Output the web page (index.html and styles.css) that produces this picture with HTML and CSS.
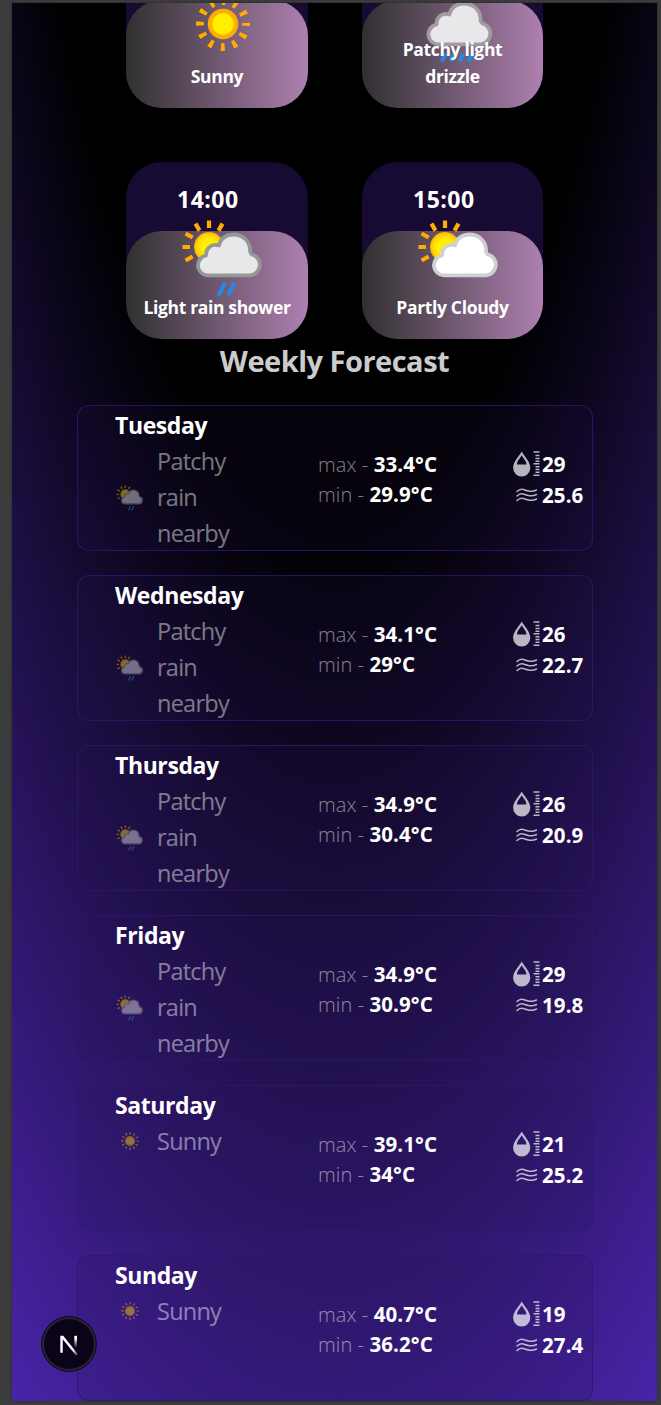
FILE: index.html
```
<!DOCTYPE html>
<html lang="en">
<head>
<meta charset="utf-8">
<title>Weather</title>
<link rel="stylesheet" href="styles.css">
</head>
<body>
<svg class="sprite" aria-hidden="true">
  <defs>
    <radialGradient id="sunFill"><stop offset=".45" stop-color="#fff000"/><stop offset=".8" stop-color="#ffd60a"/><stop offset="1" stop-color="#ffae00"/></radialGradient>
    <symbol id="sunny" viewBox="0 0 96 96">
      <circle cx="48" cy="48" r="13" fill="#fff000" stroke="#ffae00" stroke-width="4.5"/>
      <circle cx="48" cy="48" r="23" fill="none" stroke="#ffae00" stroke-width="8" stroke-dasharray="4 8.043" stroke-dashoffset="2"/>
    </symbol>
    <symbol id="halfsun" viewBox="0 0 96 96">
      <circle cx="34" cy="40" r="15" fill="url(#sunFill)"/>
      <path d="M34 13.500v7.500M20.500 16.600l4 7M47.500 16.600l-4 7M10.600 26.500l7 4M7.500 40h7.500M10.600 53.500l7-4" fill="none" stroke="#ffae00" stroke-width="4.200"/>
    </symbol>
    <symbol id="cloud" viewBox="0 0 96 96">
      <path d="M32.500 68.300a10 10 0 0 1-1.500-19.800C31 40.500 37 36.500 44 38.500C45.500 31 52 27.500 58.500 27.500C68 27.500 75.500 34.500 75 44.500C75.300 46 76 47 77 47.500A10.600 10.600 0 0 1 75 68.300Z" stroke-width="3.800" stroke-linejoin="round"/>
    </symbol>
    <symbol id="partly" viewBox="0 0 96 96">
      <use href="#halfsun"/><use href="#cloud" fill="#fff" stroke="#cfd0d2"/>
    </symbol>
    <symbol id="shower" viewBox="0 0 96 96">
      <use href="#halfsun"/><use href="#cloud" fill="#e8e8eb" stroke="#969898"/>
      <path d="M50 75.500l-6.500 13M59.500 75.500l-6.500 13" stroke="#2589e4" stroke-width="4"/>
    </symbol>
    <symbol id="drizzle" viewBox="0 0 96 96">
      <use href="#cloud" x="-5.500" fill="#e8e8eb" stroke="#a09ca0"/>
      <path d="M34.500 77.500l-4 8M43.500 77.500l-4 8M52.500 77.500l-4 8M61.500 77.500l-4 8" stroke="#2589e4" stroke-width="4"/>
    </symbol>
    <symbol id="humidity" viewBox="0 0 27 26">
      <path fill-rule="evenodd" d="M8.700.5C11 5 17.300 10.500 17.300 16.800a8.600 8.600 0 0 1-17.200 0C.1 10.500 6.400 5 8.700.5ZM8.700 4.300C7 7.500 4 10 4 13.500h9.400C13.400 10 10.400 7.500 8.700 4.300Z"/>
      <path d="M20.500 1h6M22.500 4.400h4M22.500 7.600h4M20.500 12.800h6M22.500 10.200h4M22.500 15.800h4M22.500 18.400h4M22.500 21.200h4M20.500 24.200h6" stroke="currentColor" stroke-width="1.500"/>
    </symbol>
    <symbol id="wind" viewBox="0 0 22 16">
      <path d="M1 4.500C5 .5 8 2.800 11.500 3.800S17 5 20.500 3M1 9C5 5 8 7.300 11.500 8.300S17 9.500 20.500 7.500M1 13.500C5 9.500 8 11.800 11.500 12.800S17 14 20.500 12" fill="none" stroke="currentColor" stroke-width="1.500" stroke-linecap="round"/>
    </symbol>
  </defs>
</svg>
<main class="page">
  <section class="hours">
    <article class="hour"><div class="panel"><svg class="hour-icon"><use href="#sunny"/></svg><p class="cond">Sunny</p></div></article>
    <article class="hour"><div class="panel"><svg class="hour-icon"><use href="#drizzle"/></svg><p class="cond">Patchy light<br>drizzle</p></div></article>
    <article class="hour"><span class="time">14:00</span><div class="panel"><svg class="hour-icon"><use href="#shower"/></svg><p class="cond">Light rain shower</p></div></article>
    <article class="hour"><span class="time">15:00</span><div class="panel"><svg class="hour-icon"><use href="#partly"/></svg><p class="cond">Partly Cloudy</p></div></article>
  </section>
  <h2 class="heading">Weekly Forecast</h2>
  <section class="week">
    <article class="day">
      <div class="summary"><h3>Tuesday</h3><div class="sky"><svg><use href="#shower"/></svg><p>Patchy<br>rain<br>nearby</p></div></div>
      <div class="temps"><p>max - <b>33.4°C</b></p><p>min - <b>29.9°C</b></p></div>
      <div class="stats"><p><svg class="hum"><use href="#humidity"/></svg><b>29</b></p><p><svg class="wind"><use href="#wind"/></svg><b>25.6</b></p></div>
    </article>
    <article class="day">
      <div class="summary"><h3>Wednesday</h3><div class="sky"><svg><use href="#shower"/></svg><p>Patchy<br>rain<br>nearby</p></div></div>
      <div class="temps"><p>max - <b>34.1°C</b></p><p>min - <b>29°C</b></p></div>
      <div class="stats"><p><svg class="hum"><use href="#humidity"/></svg><b>26</b></p><p><svg class="wind"><use href="#wind"/></svg><b>22.7</b></p></div>
    </article>
    <article class="day">
      <div class="summary"><h3>Thursday</h3><div class="sky"><svg><use href="#shower"/></svg><p>Patchy<br>rain<br>nearby</p></div></div>
      <div class="temps"><p>max - <b>34.9°C</b></p><p>min - <b>30.4°C</b></p></div>
      <div class="stats"><p><svg class="hum"><use href="#humidity"/></svg><b>26</b></p><p><svg class="wind"><use href="#wind"/></svg><b>20.9</b></p></div>
    </article>
    <article class="day">
      <div class="summary"><h3>Friday</h3><div class="sky"><svg><use href="#shower"/></svg><p>Patchy<br>rain<br>nearby</p></div></div>
      <div class="temps"><p>max - <b>34.9°C</b></p><p>min - <b>30.9°C</b></p></div>
      <div class="stats"><p><svg class="hum"><use href="#humidity"/></svg><b>29</b></p><p><svg class="wind"><use href="#wind"/></svg><b>19.8</b></p></div>
    </article>
    <article class="day">
      <div class="summary"><h3>Saturday</h3><div class="sky"><svg><use href="#sunny"/></svg><p>Sunny</p></div></div>
      <div class="temps"><p>max - <b>39.1°C</b></p><p>min - <b>34°C</b></p></div>
      <div class="stats"><p><svg class="hum"><use href="#humidity"/></svg><b>21</b></p><p><svg class="wind"><use href="#wind"/></svg><b>25.2</b></p></div>
    </article>
    <article class="day">
      <div class="summary"><h3>Sunday</h3><div class="sky"><svg><use href="#sunny"/></svg><p>Sunny</p></div></div>
      <div class="temps"><p>max - <b>40.7°C</b></p><p>min - <b>36.2°C</b></p></div>
      <div class="stats"><p><svg class="hum"><use href="#humidity"/></svg><b>19</b></p><p><svg class="wind"><use href="#wind"/></svg><b>27.4</b></p></div>
    </article>
  </section>
  <button class="badge" aria-label="Developer tools">
    <svg viewBox="0 0 56 56">
      <defs><linearGradient id="fade" x1="0" y1="0" x2="0" y2="1"><stop offset=".2" stop-color="#fff"/><stop offset="1" stop-color="#fff" stop-opacity="0"/></linearGradient>
      <linearGradient id="diag" x1="0" y1="0" x2="1" y2="1"><stop offset=".7" stop-color="#fff"/><stop offset="1" stop-color="#fff" stop-opacity=".15"/></linearGradient></defs>
      <path d="M19 19.500h3L37.300 38.500l-2 1.500L21.500 23V37H19Z" fill="url(#diag)"/>
      <rect x="33.500" y="19.500" width="2.800" height="12.500" fill="url(#fade)"/>
    </svg>
  </button>
</main>
</body>
</html>
```
FILE: styles.css
```
* { box-sizing: border-box; margin: 0; padding: 0; }
html, body { height: 1405px; overflow: hidden; }
body {
  padding: 3px 4px 4px 12px;
  background: #3c3c3c;
  color: #fff;
  font-family: "Open Sans", "Noto Sans", sans-serif;
}
.sprite { position: absolute; width: 0; height: 0; }
.page {
  position: relative;
  height: 1398px;
  overflow: hidden;
  background: radial-gradient(807px 2766px at 322.500px -595px, #000 40%, #63e 100%);
  box-shadow: 0 0 2px #222;
}
.hours {
  display: grid;
  grid-template-columns: 182px 181px;
  justify-content: center;
  gap: 54px;
  margin: -72px 0 0;
}
.hour {
  height: 177px;
  display: flex;
  flex-direction: column;
  border-radius: 36px;
  background: #180b33;
}
.time {
  margin: 19px 0 0 51px;
  font-size: 23px;
  line-height: 36px;
  font-weight: 700;
  letter-spacing: .5px;
}
.panel {
  height: 108px;
  margin-top: auto;
  display: flex;
  flex-direction: column;
  align-items: center;
  justify-content: flex-end;
  padding-bottom: 18px;
  border-radius: 36px;
  background: linear-gradient(to right, #303030, #ae80b0);
  position: relative;
}
.hour-icon { position: absolute; left: 49px; top: -24px; width: 96px; height: 96px; }
.cond {
  position: relative;
  font-size: 17.5px;
  line-height: 27px;
  font-weight: 700;
  text-align: center;
  white-space: nowrap;
  letter-spacing: -.35px;
}
.heading {
  height: 45px;
  line-height: 43px;
  font-size: 29px;
  font-weight: 700;
  text-align: center;
  color: #ccc;
  letter-spacing: -.5px;
}
.week { display: grid; gap: 24px; padding: 21px 64px 0 65px; }
.day {
  height: 146px;
  display: grid;
  grid-template-columns: 203px 194px 1fr;
  padding-left: 37px;
  border: 1px solid rgba(46, 24, 112, .8);
  border-radius: 12px;
  background: rgba(38, 17, 90, .15);
}
h3 { height: 38px; line-height: 39px; font-size: 23px; font-weight: 700; letter-spacing: -.4px; }
.sky { display: flex; align-items: center; opacity: .45; font-size: 23.5px; line-height: 36px; letter-spacing: -.75px; }
.sky p { position: relative; top: -1px; }
.sky svg { width: 32px; height: 32px; margin: 0 11px 0 -1px; position: relative; top: -1px; }
.temps { padding-top: 44px; color: rgba(255, 255, 255, .5); font-size: 20px; font-weight: 300; letter-spacing: .1px; }
.temps p { height: 30px; line-height: 29px; }
.temps b, .stats b { color: #fff; font-weight: 700; }
.temps b { font-size: 20.5px; line-height: 1; letter-spacing: .1px; }
.stats { padding-top: 43px; font-size: 20.5px; line-height: 30px; color: rgba(255, 255, 255, .7); letter-spacing: .1px; }
.stats p { display: flex; align-items: center; height: 31px; }
.stats b { position: relative; top: -1px; }
.stats svg { fill: currentColor; flex: none; position: relative; top: -1px; }
.hum { width: 27px; height: 26px; margin: 0 2px 0 1px; }
.wind { width: 22px; height: 16px; margin: 0 4px 0 4px; }
.badge {
  position: absolute;
  left: 29px;
  top: 1313px;
  width: 56px;
  height: 56px;
  border-radius: 50%;
  border: 1px solid #15101d;
  background: #0b0418;
  box-shadow: inset 0 0 0 2px #2b2238;
}
.badge svg { display: block; width: 54px; height: 54px; }
```
